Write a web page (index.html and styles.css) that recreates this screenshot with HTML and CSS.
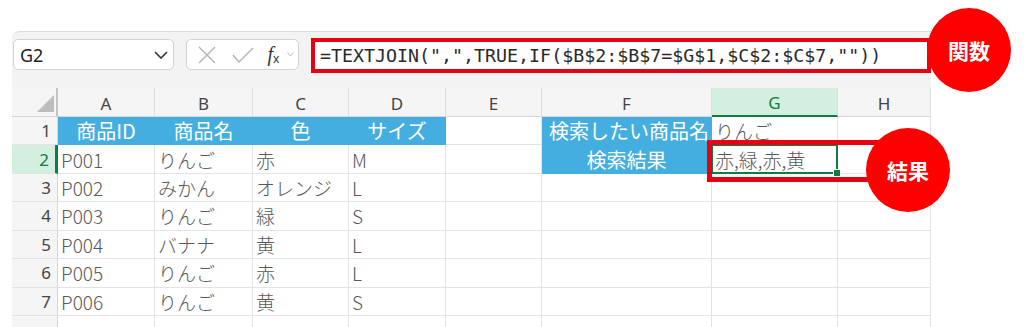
FILE: index.html
```html
<!DOCTYPE html>
<html lang="ja">
  <head>
    <meta charset="UTF-8" />
    <meta name="viewport" content="width=device-width, initial-scale=1.0" />
    <title>TEXTJOIN</title>
    <link rel="stylesheet" href="styles.css">
  </head>
  <body>
    <div class="page">
      <div class="excel">
        <!-- formula bar -->
        <div class="bar">
          <div class="namebox">
            <span>G2</span>
            <svg width="14" height="8" viewBox="0 0 14 8"><path d="M1 1 L7 7 L13 1" fill="none" stroke="#333" stroke-width="1.6"/></svg>
          </div>
          <div class="fxbox">
            <svg width="18" height="18" viewBox="0 0 18 18"><path d="M1 1 L17 17 M17 1 L1 17" stroke="#b3b3b3" stroke-width="1.4"/></svg>
            <svg width="22" height="16" viewBox="0 0 22 16"><path d="M1 8 L7 15 L21 1" fill="none" stroke="#b3b3b3" stroke-width="1.4"/></svg>
            <span class="fx">f<sub>x</sub></span>
            <svg width="7" height="5" viewBox="0 0 7 5"><path d="M0.5 0.5 L3.5 4 L6.5 0.5" fill="none" stroke="#bbb" stroke-width="1"/></svg>
          </div>
          <div class="formula">=TEXTJOIN(",",TRUE,IF($B$2:$B$7=$G$1,$C$2:$C$7,""))</div>
        </div>

        <!-- sheet -->
        <div class="sheet">
          <div class="hd corner"><span class="tri"></span></div>
          <div class="hd">A</div>
          <div class="hd">B</div>
          <div class="hd">C</div>
          <div class="hd">D</div>
          <div class="hd">E</div>
          <div class="hd">F</div>
          <div class="hd sel-col">G</div>
          <div class="hd">H</div>

          <div class="rh">1</div>
          <div class="c blue ctr">商品ID</div>
          <div class="c blue ctr">商品名</div>
          <div class="c blue ctr">色</div>
          <div class="c blue ctr">サイズ</div>
          <div class="c"></div>
          <div class="c blue end">検索したい商品名</div>
          <div class="c">りんご</div>
          <div class="c"></div>

          <div class="rh sel-row">2</div>
          <div class="c">P001</div>
          <div class="c">りんご</div>
          <div class="c">赤</div>
          <div class="c">M</div>
          <div class="c"></div>
          <div class="c blue ctr">検索結果</div>
          <div class="c active">赤,緑,赤,黄</div>
          <div class="c"></div>

          <div class="rh">3</div>
          <div class="c">P002</div>
          <div class="c">みかん</div>
          <div class="c">オレンジ</div>
          <div class="c">L</div>
          <div class="c"></div>
          <div class="c"></div>
          <div class="c"></div>
          <div class="c"></div>

          <div class="rh">4</div>
          <div class="c">P003</div>
          <div class="c">りんご</div>
          <div class="c">緑</div>
          <div class="c">S</div>
          <div class="c"></div>
          <div class="c"></div>
          <div class="c"></div>
          <div class="c"></div>

          <div class="rh">5</div>
          <div class="c">P004</div>
          <div class="c">バナナ</div>
          <div class="c">黄</div>
          <div class="c">L</div>
          <div class="c"></div>
          <div class="c"></div>
          <div class="c"></div>
          <div class="c"></div>

          <div class="rh">6</div>
          <div class="c">P005</div>
          <div class="c">りんご</div>
          <div class="c">赤</div>
          <div class="c">L</div>
          <div class="c"></div>
          <div class="c"></div>
          <div class="c"></div>
          <div class="c"></div>

          <div class="rh">7</div>
          <div class="c">P006</div>
          <div class="c">りんご</div>
          <div class="c">黄</div>
          <div class="c">S</div>
          <div class="c"></div>
          <div class="c"></div>
          <div class="c"></div>
          <div class="c"></div>

          <div class="rh last">8</div>
          <div class="c"></div>
          <div class="c"></div>
          <div class="c"></div>
          <div class="c"></div>
          <div class="c"></div>
          <div class="c"></div>
          <div class="c"></div>
          <div class="c"></div>
        </div>
      </div>

      <!-- annotations -->
      <div class="result-frame"></div>
      <div class="badge badge-func">関数</div>
      <div class="badge badge-result">結果</div>
    </div>
  </body>
</html>
```

FILE: styles.css
```css
body {
  margin: 0;
  background: #fff;
  font-family: "Noto Sans CJK JP", "Noto Sans", sans-serif;
}

.page {
  position: relative;
  width: 1024px;
  height: 327px;
  overflow: hidden;
}

.excel {
  margin-left: 12px;
  padding-top: 31px;
  width: 919px;
}

/* formula bar */
.bar {
  height: 57px;
  box-sizing: border-box;
  background: #f3f3f3;
  border-top: 1px solid #dadada;
  border-top-left-radius: 8px;
  display: flex;
  align-items: flex-start;
  padding-left: 1px;
  gap: 12px;
}

.namebox {
  margin-top: 7px;
  width: 165px;
  height: 31px;
  box-sizing: border-box;
  background: #fff;
  border: 1px solid #d2d2d2;
  border-radius: 5px;
  display: flex;
  align-items: center;
  justify-content: space-between;
  padding: 0 5px 0 6px;
  font-family: "Noto Sans", sans-serif;
  font-size: 18px;
  color: #222;
}

.fxbox {
  margin-top: 7px;
  width: 115px;
  height: 31px;
  box-sizing: border-box;
  background: #fff;
  border: 1px solid #d2d2d2;
  border-radius: 5px;
  display: flex;
  align-items: center;
  padding-left: 11px;
}

.fxbox svg:nth-child(2) {
  margin-left: 16px;
}

.fx {
  margin-left: 13px;
  font-family: "Liberation Serif", serif;
  font-style: italic;
  font-size: 20px;
  color: #333;
  line-height: 1;
}

.fx sub {
  font-family: "Noto Sans", sans-serif;
  font-style: normal;
  font-size: 12px;
  vertical-align: -2px;
}

.fxbox svg:last-child {
  margin-left: 8px;
}

.formula {
  margin-top: 6px;
  width: 620px;
  height: 35px;
  flex-shrink: 0;
  box-sizing: border-box;
  background: #fff;
  border: 4px solid #e60012;
  padding-left: 5px;
  font-family: "DejaVu Sans Mono", monospace;
  font-size: 18.3px;
  line-height: 27px;
  color: #2a2a2a;
  white-space: nowrap;
}

/* sheet grid */
.sheet {
  display: grid;
  grid-template-columns: 46px 97px 98px 96px 97px 96px 170px 126px 93px;
  grid-template-rows: 29px repeat(7, 28.43px) 28px;
  background: #fff;
}

.hd {
  background: #f5f5f5;
  border-right: 1px solid #dedede;
  border-bottom: 1px solid #d6d6d6;
  display: flex;
  align-items: center;
  justify-content: center;
  font-family: "Noto Sans", sans-serif;
  font-size: 17px;
  color: #444;
  padding-top: 2px;
  box-sizing: border-box;
}

.corner {
  position: relative;
  border-right: 2px solid #c4c4c4;
}

.tri {
  position: absolute;
  right: 2px;
  bottom: 4px;
  width: 0;
  height: 0;
  border-left: 17px solid transparent;
  border-bottom: 17px solid #bdbdbd;
}

.sel-col {
  background: #d3efdf;
  color: #107c41;
  border-bottom: 2px solid #107c41;
}

.rh {
  background: #f5f5f5;
  border-right: 1px solid #d6d6d6;
  border-bottom: 1px solid #e3e3e3;
  display: flex;
  align-items: center;
  justify-content: flex-end;
  padding-right: 6px;
  box-sizing: border-box;
  font-family: "Noto Sans", sans-serif;
  font-size: 17px;
  color: #444;
}

.rh.last {
  align-items: flex-start;
  padding-top: 5px;
}

.sel-row {
  background: #d3efdf;
  color: #107c41;
  border-right: 3px solid #107c41;
}

.c {
  border-right: 1px solid #e3e3e3;
  border-bottom: 1px solid #e3e3e3;
  display: flex;
  align-items: center;
  padding-left: 3px;
  box-sizing: border-box;
  font-size: 19px;
  font-weight: 300;
  color: #595959;
  white-space: nowrap;
  overflow: hidden;
}

.blue {
  background: #45aee0;
  border-color: #45aee0;
  color: #fff;
  font-size: 20px;
  font-weight: 400;
}

.ctr {
  justify-content: center;
  padding-left: 0;
}

.end {
  justify-content: flex-end;
  padding: 0 2px 0 0;
}

.active {
  position: relative;
  overflow: visible;
}

.active::after {
  content: "";
  position: absolute;
  left: -1px;
  top: -1px;
  right: -1px;
  bottom: -1px;
  border: 2px solid #107c41;
}

.active::before {
  content: "";
  position: absolute;
  right: -4px;
  bottom: -4px;
  width: 6px;
  height: 6px;
  background: #107c41;
  border: 1px solid #fff;
  z-index: 1;
}

/* annotations */
.result-frame {
  position: absolute;
  left: 707px;
  top: 140px;
  width: 175px;
  height: 42px;
  box-sizing: border-box;
  border: 5px solid #e60012;
}

.badge {
  position: absolute;
  width: 84px;
  height: 84px;
  border-radius: 50%;
  background: #ff0000;
  color: #fff;
  font-weight: bold;
  font-size: 21px;
  display: flex;
  align-items: center;
  justify-content: center;
}

.badge-func {
  left: 927px;
  top: 8px;
}

.badge-result {
  left: 866px;
  top: 128px;
}
```
